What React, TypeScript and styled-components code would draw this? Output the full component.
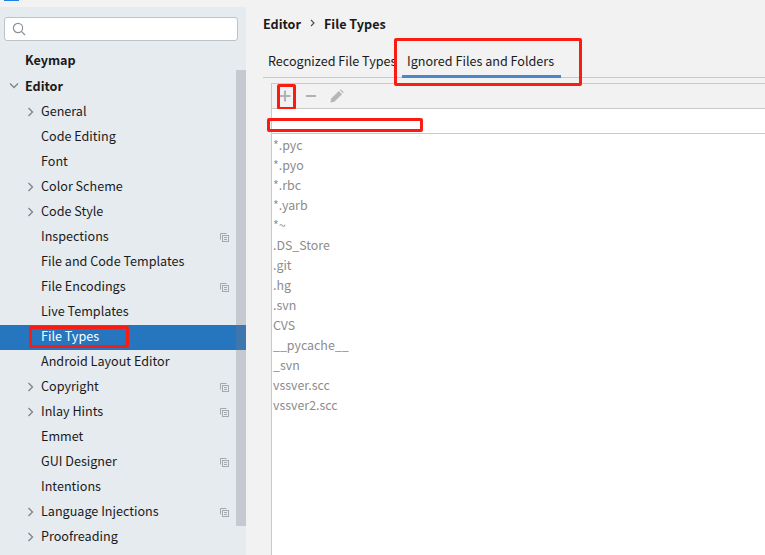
import React from 'react'
import styled, { createGlobalStyle } from 'styled-components'

const navItems: NavItem[] = [
  { label: 'General', arrow: true },
  { label: 'Code Editing' },
  { label: 'Font' },
  { label: 'Color Scheme', arrow: true },
  { label: 'Code Style', arrow: true },
  { label: 'Inspections', copy: true },
  { label: 'File and Code Templates' },
  { label: 'File Encodings', copy: true },
  { label: 'Live Templates' },
  { label: 'File Types', selected: true },
  { label: 'Android Layout Editor' },
  { label: 'Copyright', arrow: true, copy: true },
  { label: 'Inlay Hints', arrow: true, copy: true },
  { label: 'Emmet' },
  { label: 'GUI Designer', copy: true },
  { label: 'Intentions' },
  { label: 'Language Injections', arrow: true, copy: true },
  { label: 'Proofreading', arrow: true },
]

const patterns = [
  '*.pyc',
  '*.pyo',
  '*.rbc',
  '*.yarb',
  '*~',
  '.DS_Store',
  '.git',
  '.hg',
  '.svn',
  'CVS',
  '__pycache__',
  '_svn',
  'vssver.scc',
  'vssver2.scc',
]

interface NavItem {
  label: string
  arrow?: boolean
  copy?: boolean
  selected?: boolean
}

function App() {
  return (
    <>
      <GlobalStyle />
      <Page>
        <TitleBar>
          <AppIcon />
        </TitleBar>
        <Body>
          <Sidebar>
            <SearchBox>
              <SearchIcon />
            </SearchBox>
            <NavList>
              <TopRow>
                <TopSlot />
                <Bold>Keymap</Bold>
              </TopRow>
              <TopRow>
                <TopSlot>
                  <ChevronDown />
                </TopSlot>
                <Bold>Editor</Bold>
              </TopRow>
              {navItems.map(item => (
                <NavRow key={item.label} $selected={item.selected}>
                  <ArrowSlot>{item.arrow && <ChevronRight />}</ArrowSlot>
                  <span>{item.label}</span>
                  {item.copy && <CopyIcon />}
                  {item.selected && <Mark $left={29} $top={1} $width={100} $height={22} />}
                </NavRow>
              ))}
            </NavList>
            <Scrollbar />
          </Sidebar>

          <Content>
            <Breadcrumb>
              <span>Editor</span>
              <CrumbArrow />
              <span>File Types</span>
            </Breadcrumb>
            <Tabs>
              <Tab>Recognized File Types</Tab>
              <Tab $active>Ignored Files and Folders</Tab>
              <Mark $left={131} $top={-8} $width={188} $height={48} />
            </Tabs>
            <Panel>
              <Toolbar>
                <ToolButton>
                  <PlusIcon />
                  <Mark $left={1} $top={0} $width={19} $height={26} />
                </ToolButton>
                <ToolButton>
                  <MinusIcon />
                </ToolButton>
                <ToolButton>
                  <PencilIcon />
                </ToolButton>
              </Toolbar>
              <InputRow>
                <Mark $left={-5} $top={9} $width={156} $height={14} />
              </InputRow>
              <PatternList>
                {patterns.map(pattern => (
                  <Pattern key={pattern}>{pattern}</Pattern>
                ))}
              </PatternList>
            </Panel>
          </Content>
        </Body>
      </Page>
    </>
  )
}

///////////////////////////////////////////////////////////////////////////////////

function SearchIcon() {
  return (
    <svg width="14" height="14" viewBox="0 0 14 14" fill="none" stroke="#8c8f93" strokeWidth="1.2">
      <circle cx="6" cy="6" r="4.6" />
      <path d="M9.4 9.4 13 13" />
    </svg>
  )
}

function ChevronRight() {
  return (
    <svg width="8" height="10" viewBox="0 0 8 10" fill="none" stroke="#7f8388" strokeWidth="1.3">
      <path d="M1.5 1 5.5 5 1.5 9" />
    </svg>
  )
}

function ChevronDown() {
  return (
    <svg width="10" height="8" viewBox="0 0 10 8" fill="none" stroke="#7f8388" strokeWidth="1.3">
      <path d="M1 1.5 5 5.5 9 1.5" />
    </svg>
  )
}

function CrumbArrow() {
  return (
    <svg width="5" height="8" viewBox="0 0 5 8" fill="none" stroke="#4a4a4a" strokeWidth="1.1">
      <path d="M1 1 4 4 1 7" />
    </svg>
  )
}

function CopyIcon() {
  return (
    <CopySvg width="9" height="9" viewBox="0 0 9 9" fill="none" stroke="#a4a9ae" strokeWidth="1">
      <path d="M.5 6.5V.5H6.5" />
      <rect x="2.5" y="2.5" width="6" height="6" />
      <path d="M4 4.5h3M4 6.5h3" />
    </CopySvg>
  )
}

function PlusIcon() {
  return (
    <svg width="12" height="12" viewBox="0 0 12 12" fill="#afb1b3">
      <path d="M5 .5h2V5h4.5v2H7v4.5H5V7H.5V5H5z" />
    </svg>
  )
}

function MinusIcon() {
  return (
    <svg width="12" height="12" viewBox="0 0 12 12" fill="#afb1b3">
      <rect x="1" y="5" width="10" height="2" />
    </svg>
  )
}

function PencilIcon() {
  return (
    <svg width="14" height="14" viewBox="0 0 14 14" fill="#b4b6b8">
      <path d="M.4 13.6 1.2 9.6 8.8 2 12 5.2 4.4 12.8z" />
      <path d="M9.8 1 10.8.3 13.7 3.2 13 4.2z" />
    </svg>
  )
}

///////////////////////////////////////////////////////////////////////////////////

const GlobalStyle = createGlobalStyle`
  html, body {
    margin: 0;
    padding: 0;
    background: #f2f2f2;
  }
  body {
    font-family: 'Noto Sans CJK SC', 'Noto Sans', sans-serif;
    font-size: 12.6px;
    color: #1a1a1a;
  }
`

const Page = styled.div`
  width: 765px;
  height: 555px;
  overflow: hidden;
  display: flex;
  flex-direction: column;
`

const TitleBar = styled.div`
  height: 7px;
  flex: none;
  background: #f2f2f2;
`

const AppIcon = styled.div`
  width: 15px;
  height: 1px;
  margin-left: 4px;
  background: #1e7fe8;
`

const Body = styled.div`
  flex: 1;
  display: flex;
  min-height: 0;
`

const Sidebar = styled.aside`
  position: relative;
  width: 246px;
  flex: none;
  background: #e6ebf0;
  padding: 10px 0 0;
  box-sizing: border-box;
`

const SearchBox = styled.div`
  height: 24px;
  margin: 0 8px 0 4px;
  box-sizing: border-box;
  background: #fff;
  border: 1px solid #bfc2c5;
  border-radius: 3px;
  display: flex;
  align-items: center;
  padding-left: 7px;
`

const NavList = styled.div`
  padding-top: 7px;
`

const TopRow = styled.div`
  height: 26px;
  box-sizing: border-box;
  padding: 0 10px 3px 9px;
  display: flex;
  align-items: center;
`

const TopSlot = styled.span`
  width: 16px;
  flex: none;
  display: inline-flex;
  align-items: center;
`

const Bold = styled.span`
  font-weight: 700;
`

const NavRow = styled.div<{ $selected?: boolean }>`
  position: relative;
  height: 25px;
  box-sizing: border-box;
  padding: 0 17px 4px 27px;
  display: flex;
  align-items: center;
  background: ${p => (p.$selected ? '#2675bf' : 'transparent')};
  color: ${p => (p.$selected ? '#fff' : '#1a1a1a')};
`

const ArrowSlot = styled.span`
  width: 14px;
  display: inline-flex;
  align-items: center;
  flex: none;
  position: relative;
  top: 1px;
`

const CopySvg = styled.svg`
  margin-left: auto;
  position: relative;
  top: 2px;
`

const Scrollbar = styled.div`
  position: absolute;
  top: 63px;
  right: 0;
  width: 10px;
  height: 456px;
  background: rgba(120, 125, 135, 0.3);
`

const Content = styled.main`
  flex: 1;
  min-width: 0;
  padding: 7px 0 0 17px;
  display: flex;
  flex-direction: column;
`

const Breadcrumb = styled.div`
  height: 18px;
  display: flex;
  align-items: center;
  gap: 9px;
  font-weight: 700;
`

const Tabs = styled.div`
  position: relative;
  margin-top: 14px;
  height: 31px;
  display: flex;
  align-items: flex-start;
  border-bottom: 1px solid #c9c9c9;
`

const Tab = styled.div<{ $active?: boolean }>`
  height: 32px;
  box-sizing: border-box;
  padding-top: 5px;
  white-space: nowrap;
  width: ${p => (p.$active ? '159px' : '139px')};
  padding-left: 5px;
  border-bottom: ${p => (p.$active ? '3px solid #4a86c8' : 'none')};
`

const Panel = styled.div`
  flex: 1;
  margin: 5px 0 0 8px;
  border-left: 1px solid #c9c9c9;
  border-top: 1px solid #c9c9c9;
  display: flex;
  flex-direction: column;
`

const Toolbar = styled.div`
  height: 24px;
  flex: none;
  display: flex;
  align-items: center;
  padding-left: 4px;
  gap: 8px;
  border-bottom: 1px solid #c9c9c9;
`

const ToolButton = styled.div`
  position: relative;
  width: 18px;
  height: 24px;
  display: flex;
  align-items: center;
  justify-content: center;
`

const InputRow = styled.div`
  position: relative;
  height: 24px;
  flex: none;
  background: #fff;
  border-bottom: 1px solid #c9c9c9;
`

const PatternList = styled.div`
  flex: 1;
  background: #fff;
  padding-top: 1px;
  font-size: 12.4px;
`

const Pattern = styled.div`
  height: 20px;
  line-height: 20px;
  padding-left: 1px;
  color: #8c8c8c;
`

const Mark = styled.div<{ $left: number; $top: number; $width: number; $height: number }>`
  position: absolute;
  left: ${p => p.$left}px;
  top: ${p => p.$top}px;
  width: ${p => p.$width}px;
  height: ${p => p.$height}px;
  box-sizing: border-box;
  border: 3px solid #f91c12;
  border-radius: 2px;
  pointer-events: none;
`

export default App
